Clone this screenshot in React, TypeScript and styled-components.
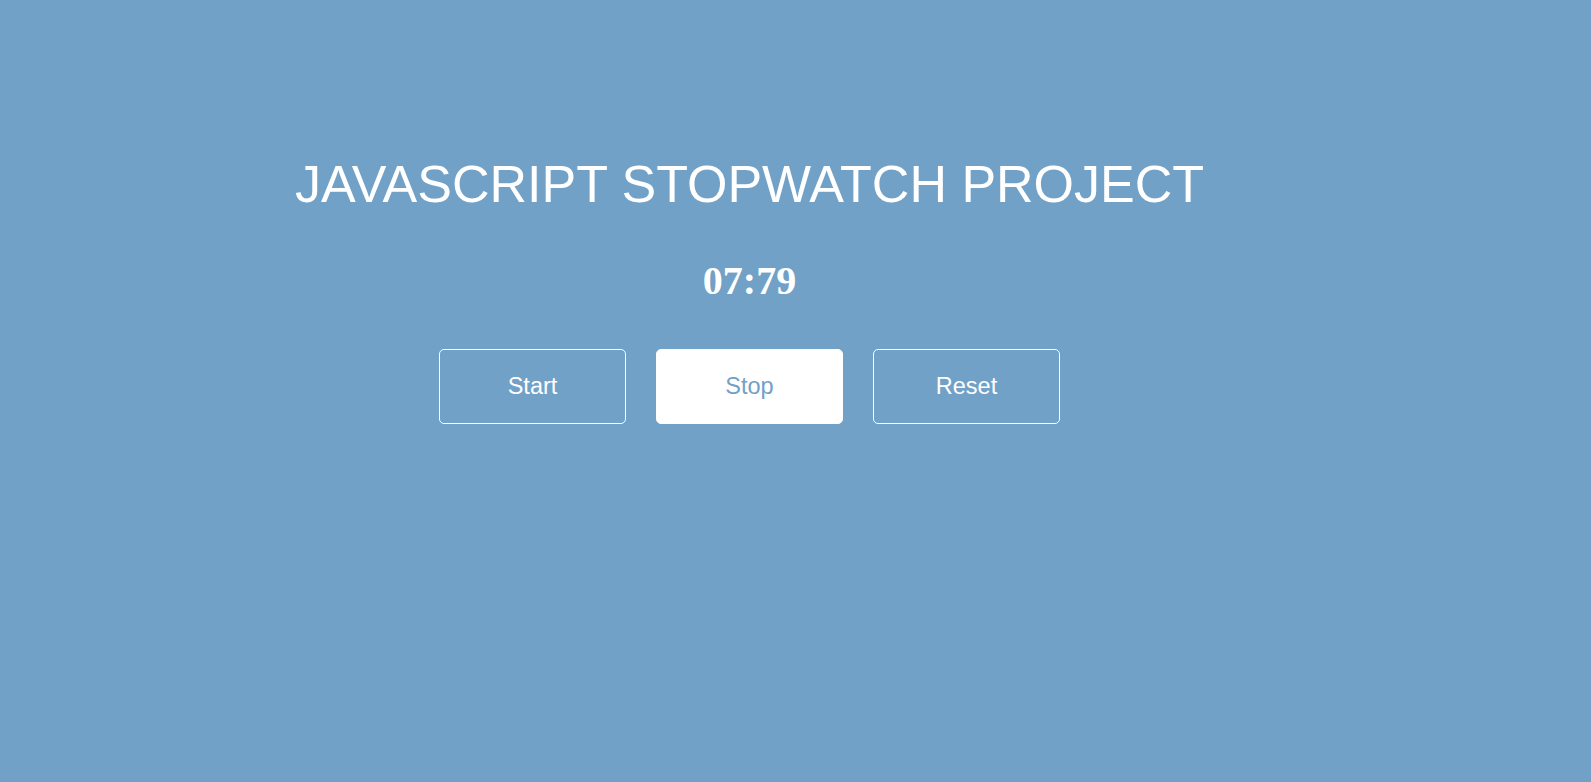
import React from "react";
import styled, { createGlobalStyle } from "styled-components";

const GlobalStyle = createGlobalStyle`
  html, body {
    margin: 0;
    padding: 0;
    background: #71a1c7;
    min-height: 100%;
  }
  body {
    font-family: "Liberation Sans", Arial, sans-serif;
    min-height: 782px;
  }
`;

const Wrapper = styled.main`
  width: 1499px;
  padding-top: 158px;
  display: flex;
  flex-direction: column;
  align-items: center;
`;

const Title = styled.h1`
  margin: 0;
  font-family: "Liberation Sans", Arial, sans-serif;
  font-weight: 400;
  font-size: 52px;
  line-height: 52px;
  color: #ffffff;
`;

const Timer = styled.div`
  margin-top: 51px;
  font-family: "Liberation Serif", "Times New Roman", serif;
  font-weight: 700;
  font-size: 40px;
  line-height: 40px;
  color: #ffffff;
`;

const ButtonRow = styled.div`
  margin-top: 48px;
  display: flex;
  gap: 30px;
`;

const Button = styled.button<{ $filled?: boolean }>`
  width: 187px;
  height: 75px;
  border: 1px solid #ffffff;
  border-radius: 5px;
  background: ${(p) => (p.$filled ? "#ffffff" : "transparent")};
  color: ${(p) => (p.$filled ? "#71a1c7" : "#ffffff")};
  font-family: "Liberation Sans", Arial, sans-serif;
  font-size: 23.5px;
  cursor: pointer;
  padding: 0;
`;

export default function App() {
  return (
    <>
      <GlobalStyle />
      <Wrapper>
        <Title>JAVASCRIPT STOPWATCH PROJECT</Title>
        <Timer>07:79</Timer>
        <ButtonRow>
          <Button>Start</Button>
          <Button $filled>Stop</Button>
          <Button>Reset</Button>
        </ButtonRow>
      </Wrapper>
    </>
  );
}
